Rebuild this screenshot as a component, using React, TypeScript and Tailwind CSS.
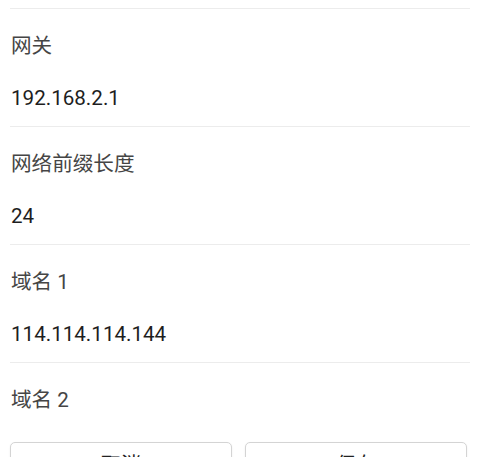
import React from "react";

const font = { fontFamily: 'Roboto, "Noto Sans CJK SC", sans-serif' };

function Section({ label, value }: { label: string; value?: string }) {
  return (
    <div className="flex flex-col">
      <div className="h-px bg-[#ececec]" />
      <div className="pt-[11px] text-[20.6px] leading-[52px] text-[#454545] px-[1px]">{label}</div>
      {value !== undefined && (
        <div className="pb-[2px] text-[20.6px] leading-[52px] text-[#1e1e1e] px-[1px]">{value}</div>
      )}
    </div>
  );
}

export default function App() {
  return (
    <div className="w-[480px] h-[457px] overflow-hidden bg-white" style={font}>
      <div className="pt-[8px] px-[10px] flex flex-col">
        <Section label="网关" value="192.168.2.1" />
        <Section label="网络前缀长度" value="24" />
        <Section label="域名 1" value="114.114.114.144" />
        <Section label="域名 2" />
        <div className="mt-[16px] flex gap-[13px]">
          <button className="w-[222px] h-[46px] rounded-[5px] border border-[#d4d4d4] bg-white text-[20px] text-[#222] shadow-[0_1px_2px_rgba(0,0,0,0.08)] flex items-center justify-center">
            取消
          </button>
          <button className="w-[222px] h-[46px] rounded-[5px] border border-[#d4d4d4] bg-white text-[20px] text-[#222] shadow-[0_1px_2px_rgba(0,0,0,0.08)] flex items-center justify-center">
            保存
          </button>
        </div>
      </div>
    </div>
  );
}
